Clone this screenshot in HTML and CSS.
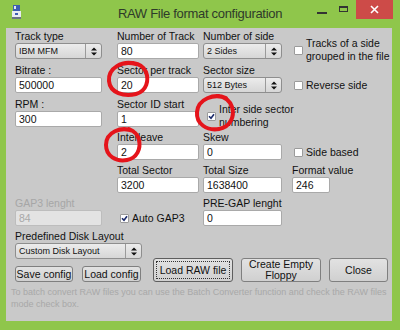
FILE: index.html
```html
<!doctype html>
<html lang="en">

<head>
  <meta charset="UTF-8" />
  <title>RAW File format configuration</title>
  <link rel="stylesheet" href="styles.css">
</head>

<body>
  <div class="window">
    <div class="titlebar">
      <svg class="app-icon" width="9" height="14" viewBox="0 0 9 14">
        <rect x="1" y="0" width="7" height="6" fill="#3d5fb0" />
        <rect x="2" y="1" width="2" height="3" fill="#dfe6f5" />
        <rect x="0" y="6" width="9" height="6" fill="#e8ecf2" />
        <rect x="0" y="12" width="9" height="2" fill="#6a7486" />
        <rect x="3" y="8" width="3" height="2" fill="#3d5fb0" />
      </svg>
      <div class="title">RAW File format configuration</div>
      <div class="controls">
        <span class="min"></span>
        <span class="max"></span>
        <span class="close">
          <svg width="9" height="9" viewBox="0 0 9 9">
            <path d="M1 1L8 8M8 1L1 8" stroke="#fff" stroke-width="1.6" />
          </svg>
        </span>
      </div>
    </div>

    <div class="client">
      <div class="grid">
        <!-- row 1 -->
        <div class="cell">
          <label>Track type</label>
          <div class="select w87"><span class="value">IBM MFM</span><span class="spin"><svg width="6" height="9" viewBox="0 0 6 9"><path d="M0 3.5L3 0.5L6 3.5ZM0 5.5L3 8.5L6 5.5Z" fill="#111" /></svg></span></div>
        </div>
        <div class="cell">
          <label>Number of Track</label>
          <input type="text" class="w82" value="80">
        </div>
        <div class="cell">
          <label>Number of side</label>
          <div class="select w79"><span class="value">2 Sides</span><span class="spin"><svg width="6" height="9" viewBox="0 0 6 9"><path d="M0 3.5L3 0.5L6 3.5ZM0 5.5L3 8.5L6 5.5Z" fill="#111" /></svg></span></div>
        </div>
        <div class="check two-lines">
          <span class="box"></span>
          <span class="text">Tracks of a side<br>grouped in the file</span>
        </div>

        <!-- row 2 -->
        <div class="cell">
          <label>Bitrate :</label>
          <input type="text" class="w87" value="500000">
        </div>
        <div class="cell">
          <label>Sector per track</label>
          <input type="text" class="w82" value="20">
        </div>
        <div class="cell">
          <label>Sector size</label>
          <div class="select w79"><span class="value">512 Bytes</span><span class="spin"><svg width="6" height="9" viewBox="0 0 6 9"><path d="M0 3.5L3 0.5L6 3.5ZM0 5.5L3 8.5L6 5.5Z" fill="#111" /></svg></span></div>
        </div>
        <div class="check">
          <span class="box"></span>
          <span class="text">Reverse side</span>
        </div>

        <!-- row 3 -->
        <div class="cell">
          <label>RPM :</label>
          <input type="text" class="w87" value="300">
        </div>
        <div class="cell">
          <label>Sector ID start</label>
          <input type="text" class="w82" value="1">
        </div>
        <div class="check two-lines span2 inter">
          <span class="box checked"><svg width="7" height="7" viewBox="0 0 7 7"><path d="M1 3.2L3 5.3L6 1.2" fill="none" stroke="#1b2a6b" stroke-width="1.6" /></svg></span>
          <span class="text">Inter side sector<br>numbering</span>
        </div>

        <!-- row 4 -->
        <div class="blank"></div>
        <div class="cell">
          <label>Interleave</label>
          <input type="text" class="w82" value="2">
        </div>
        <div class="cell">
          <label>Skew</label>
          <input type="text" class="w79" value="0">
        </div>
        <div class="check">
          <span class="box"></span>
          <span class="text">Side based</span>
        </div>

        <!-- row 5 -->
        <div class="blank"></div>
        <div class="cell">
          <label>Total Sector</label>
          <input type="text" class="w82" value="3200">
        </div>
        <div class="cell">
          <label>Total Size</label>
          <input type="text" class="w79" value="1638400">
        </div>
        <div class="cell">
          <label>Format value</label>
          <input type="text" class="w38" value="246">
        </div>

        <!-- row 6 -->
        <div class="cell disabled">
          <label>GAP3 lenght</label>
          <input type="text" class="w87" value="84" disabled>
        </div>
        <div class="check auto">
          <span class="box checked"><svg width="7" height="7" viewBox="0 0 7 7"><path d="M1 3.2L3 5.3L6 1.2" fill="none" stroke="#1b2a6b" stroke-width="1.6" /></svg></span>
          <span class="text">Auto GAP3</span>
        </div>
        <div class="cell">
          <label>PRE-GAP lenght</label>
          <input type="text" class="w79" value="0">
        </div>
        <div class="blank"></div>
      </div>

      <div class="bottom">
        <div class="layout">
          <label>Predefined Disk Layout</label>
          <div class="select w127"><span class="value">Custom Disk Layout</span><span class="spin"><svg width="6" height="9" viewBox="0 0 6 9"><path d="M0 3.5L3 0.5L6 3.5ZM0 5.5L3 8.5L6 5.5Z" fill="#111" /></svg></span></div>
          <div class="small-buttons">
            <button class="save">Save config</button>
            <button class="load">Load config</button>
          </div>
        </div>
        <div class="big-buttons">
          <button class="default">Load RAW file</button>
          <button class="create">Create Empty<br>Floppy</button>
          <button class="close-btn">Close</button>
        </div>
      </div>

      <p class="help">To batch convert RAW files you can use the Batch Converter function and check the RAW files<br>mode check box.</p>
    </div>

    <!-- hand drawn annotations -->
    <svg class="marks" width="400" height="330" viewBox="0 0 400 330">
      <path d="M136 64 C122 60 108 68 109 81 C110 93 124 97 136 94 C147 91 149 80 146 72 C144 67 140 64 133 63" />
      <path d="M133 131 C121 126 106 132 106 145 C106 156 116 162 127 160 C137 158 141 149 139 140 C138 135 134 131 129 129" />
      <path d="M226 98 C214 93 198 99 197 112 C196 124 207 131 219 129 C230 127 235 117 232 107 C230 101 225 97 218 96" />
    </svg>
  </div>
</body>

</html>
```

FILE: styles.css
```css
body {
  margin: 0;
  font-family: "Liberation Sans", Arial, sans-serif;
  font-size: 10.5px;
  color: #111;
}

.window {
  position: relative;
  width: 400px;
  height: 330px;
  background: #8fc64b;
  display: flex;
  flex-direction: column;
  overflow: hidden;
}

/* title bar */
.titlebar {
  height: 28px;
  display: grid;
  grid-template-columns: 1fr auto 1fr;
  align-items: start;
}

.app-icon {
  margin: 5px 0 0 12px;
}

.title {
  font-size: 13px;
  line-height: 28px;
  letter-spacing: -0.3px;
  color: #2e3a2a;
}

.controls {
  justify-self: end;
  display: flex;
  align-items: flex-start;
  margin-right: 7px;
}

.min {
  width: 10px;
  height: 2px;
  background: #333;
  margin: 12px 12px 0 0;
}

.max {
  width: 9px;
  height: 6px;
  box-sizing: border-box;
  border: 1px solid #333;
  border-top-width: 2px;
  margin: 6px 8px 0 0;
}

.close {
  width: 37px;
  height: 19px;
  background: #cd4b48;
  display: flex;
  align-items: center;
  justify-content: center;
}

/* client area */
.client {
  flex: 1;
  margin: 0 8px 9px 6px;
  background: #c9c9c9;
  display: flex;
  flex-direction: column;
}

.grid {
  display: grid;
  grid-template-columns: 102px 86px 89px 1fr;
  grid-template-rows: 34px 34px 33px 33px 33px 33px;
  padding: 1px 0 0 9px;
}

.cell {
  display: flex;
  flex-direction: column;
  align-items: flex-start;
}

label {
  display: block;
  height: 14px;
  line-height: 14px;
  white-space: nowrap;
}

.disabled label {
  color: #a6a6a6;
}

input[type="text"] {
  box-sizing: border-box;
  height: 16px;
  margin: 0;
  padding: 0 3px;
  border: 1px solid #a9a9a9;
  border-radius: 2px;
  background: #fff;
  font-family: inherit;
  font-size: 10.5px;
  color: #111;
  outline: none;
}

input[type="text"]:disabled {
  background: #e3e3e3;
  border-color: #bdbdbd;
  color: #a8a8a8;
}

.w87 { width: 87px; }
.w82 { width: 82px; }
.w79 { width: 79px; }
.w38 { width: 38px; }
.w127 { width: 127px; }

.select {
  box-sizing: border-box;
  height: 16px;
  display: flex;
  align-items: stretch;
  border: 1px solid #8e8e8e;
  border-radius: 3px;
  background: linear-gradient(#ececec, #d6d6d6);
  font-size: 9px;
}

.select .value {
  flex: 1;
  padding-left: 3px;
  line-height: 14px;
  white-space: nowrap;
}

.select .spin {
  width: 15px;
  border-left: 1px solid #9a9a9a;
  display: flex;
  align-items: center;
  justify-content: center;
}

/* checkboxes */
.check {
  display: flex;
  align-items: center;
  gap: 3px;
  padding-left: 2px;
  margin-top: 14px;
  height: 16px;
  white-space: nowrap;
}

.check.two-lines {
  align-self: end;
  height: auto;
  margin-top: 0;
  line-height: 13px;
}

.check.span2 {
  grid-column: span 2;
}

.check.inter {
  padding-left: 4px;
  margin-bottom: 1px;
}

.check.auto {
  padding-left: 3px;
}

.box {
  box-sizing: border-box;
  width: 9px;
  height: 9px;
  flex: none;
  border: 1px solid #9b9b9b;
  border-radius: 1px;
  background: #fff;
  display: flex;
  align-items: center;
  justify-content: center;
}

/* bottom part */
.bottom {
  display: flex;
  align-items: flex-end;
  padding-left: 9px;
}

.layout {
  width: 138px;
}

.small-buttons {
  display: flex;
  gap: 9px;
  margin-top: 7px;
}

button {
  box-sizing: border-box;
  margin: 0;
  padding: 0;
  border: 1px solid #7f7f7f;
  border-radius: 3px;
  background: linear-gradient(#e2e2e2, #d0d0d0);
  font-family: inherit;
  font-size: 10.5px;
  line-height: 11px;
  color: #111;
}

.save { width: 58px; height: 16px; }
.load { width: 59px; height: 16px; }

.big-buttons {
  display: flex;
  gap: 8px;
}

.big-buttons button {
  height: 24px;
  width: 80px;
}

.big-buttons .close-btn {
  width: 59px;
}

button.default {
  border-color: #5e5e5e;
  outline: 1px dotted #333;
  outline-offset: -4px;
}

.help {
  margin: 4px 0 0 5px;
  font-size: 9px;
  line-height: 12px;
  color: #a8a8a8;
  white-space: nowrap;
}

/* annotations */
.marks {
  position: absolute;
  left: 0;
  top: 0;
  pointer-events: none;
}

.marks path {
  fill: none;
  stroke: #e5141b;
  stroke-width: 4;
  stroke-linecap: round;
}
```
